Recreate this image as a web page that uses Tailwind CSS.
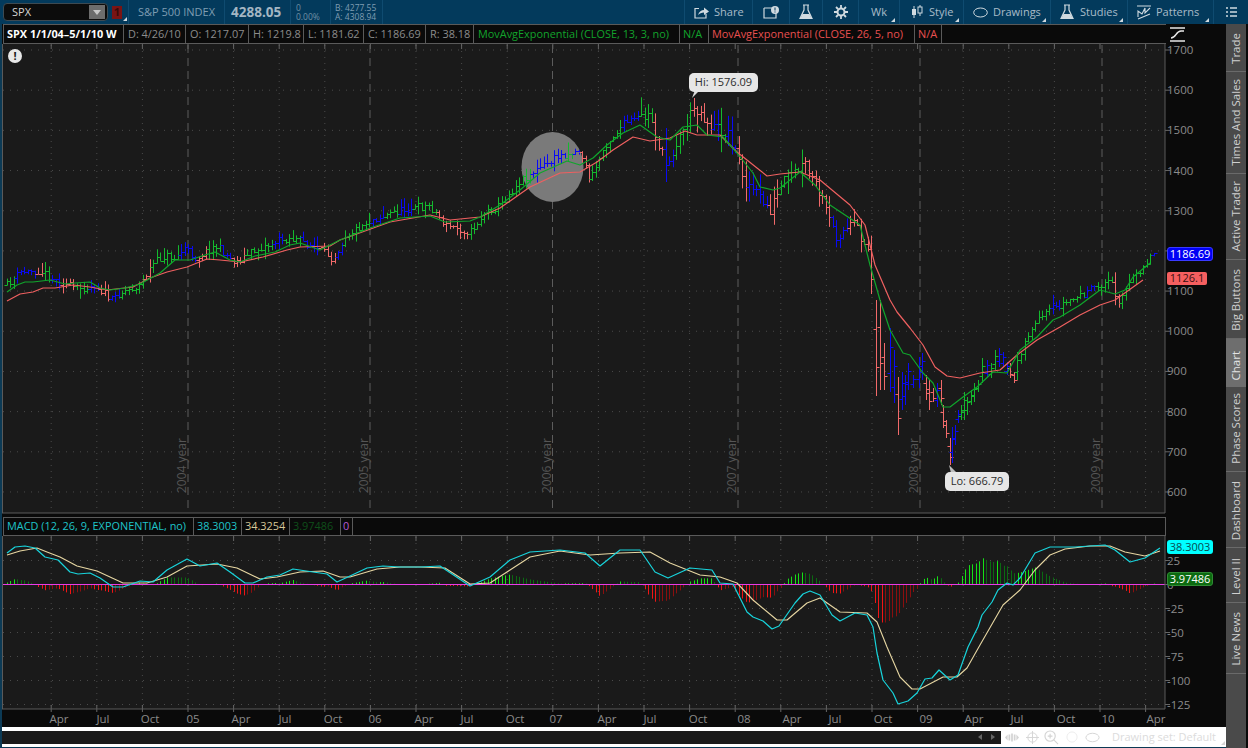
<!DOCTYPE html>
<html lang="en">

<head>
    <meta charset="UTF-8">
    <meta name="viewport" content="width=device-width, initial-scale=1.0">
    <script src="https://cdn.jsdelivr.net/npm/@tailwindcss/browser@4"></script>
    <title>SPX Chart</title>
</head>

<body class="w-[1248px] h-[748px] overflow-hidden bg-[#0a0a0a] font-['Open_Sans','Liberation_Sans',sans-serif] text-[11px]">
    <div class="relative flex flex-col w-[1248px] h-[748px]">

        <!-- top bar -->
        <div class="flex items-center h-6 shrink-0 bg-[#033a5c] text-[#a9bcc9]">
            <div class="flex items-center ml-[3px] w-[105px] h-[18px] bg-[#0c0c0c] border border-[#3d4a52] rounded-sm pl-2 text-[#d5d5d5]">
                <span class="grow">SPX</span>
                <span class="flex items-center justify-center w-[16px] h-[14px] mr-[2px] bg-[#6d6d6d]">
                    <svg width="8" height="5"><path d="M0 0H8L4 5Z" fill="#c8c8c8" /></svg>
                </span>
            </div>
            <span class="flex items-center justify-center w-[10px] h-[13px] ml-[4px] bg-[#7a1414] text-[#3a0a0a] font-bold">1</span>
            <span class="ml-[1px] mt-[14px]"><svg width="4" height="4"><path d="M4 0V4H0Z" fill="#cfd8de" /></svg></span>
            <div class="flex items-center w-[96px] h-full ml-[1px] pl-[9px] border-l border-[#0f4b70] text-[#7f9db2]">S&amp;P 500 INDEX</div>
            <div class="flex items-center w-[66px] h-full pl-[6px] border-l border-[#0f4b70] text-[13.5px] font-bold text-[#a4b6c3]">4288.05</div>
            <div class="flex flex-col justify-center w-[40px] h-full pl-[5px] border-l border-[#0f4b70] text-[8.5px] leading-[9px] text-[#6f90a6]">
                <span>0</span><span>0.00%</span>
            </div>
            <div class="flex flex-col justify-center w-[52px] h-full pl-[4px] border-l border-[#0f4b70] text-[8.5px] leading-[9px] text-[#7f9db2]">
                <span>B: 4277.55</span><span>A: 4308.94</span>
            </div>
            <div class="w-[302px] h-full border-l border-[#0f4b70]"></div>

            <div class="flex items-center w-[68px] h-full pl-[9px] gap-[5px] border-l border-[#0f4b70]">
                <svg width="15" height="13" viewBox="0 0 15 13" fill="none"><path d="M5 2.500H1V12H12V8" stroke="#d0dae0" stroke-width="1.200" /><path d="M4 9C5 5.500 7.500 4 10 4V1.500L15 5.500L10 9V6.500C7.500 6.500 5.500 7.500 4 9Z" fill="#d0dae0" /></svg>
                <span>Share</span>
            </div>
            <div class="flex items-center justify-center w-[37px] h-full border-l border-[#0f4b70]">
                <svg width="16" height="13" viewBox="0 0 16 13" fill="none"><path d="M1 2H10M1 2V12H13V7" stroke="#d0dae0" stroke-width="1.200" /><circle cx="12" cy="4" r="4" fill="#d0dae0" /><path d="M12 1.500V4.500M12 5.500V6.500" stroke="#033a5c" /></svg>
            </div>
            <div class="flex items-center justify-center w-[33px] h-full border-l border-[#0f4b70]">
                <svg width="14" height="16" viewBox="0 0 14 16" fill="none"><path d="M4 1H10M5 1V6L1 14.500H13L9 6V1" stroke="#d0dae0" stroke-width="1.200" /><path d="M3.500 10H10.500L13 15H1Z" fill="#d0dae0" /></svg>
            </div>
            <div class="flex items-center justify-center w-[36px] h-full border-l border-[#0f4b70]">
                <svg width="14" height="14" viewBox="0 0 14 14" fill="none"><circle cx="7" cy="7" r="3.500" stroke="#d0dae0" stroke-width="2" /><path d="M7 0V3M7 11V14M0 7H3M11 7H14M2 2L4 4M10 10L12 12M12 2L10 4M4 10L2 12" stroke="#d0dae0" stroke-width="1.800" /></svg>
            </div>
            <div class="relative flex items-center justify-center w-[41px] h-full border-l border-[#0f4b70]">
                <span>Wk</span>
                <svg class="absolute right-[4px] bottom-[2px]" width="4" height="4"><path d="M4 0V4H0Z" fill="#cfd8de" /></svg>
            </div>
            <div class="relative flex items-center w-[64px] h-full pl-[11px] gap-[6px] border-l border-[#0f4b70]">
                <svg width="12" height="14" viewBox="0 0 12 14" fill="none"><path d="M3 1V13M9 0V11" stroke="#d0dae0" /><rect x="1" y="4" width="4" height="6" fill="#d0dae0" /><rect x="7" y="2" width="4" height="6" fill="#033a5c" stroke="#d0dae0" /></svg>
                <span>Style</span>
                <svg class="absolute right-[4px] bottom-[2px]" width="4" height="4"><path d="M4 0V4H0Z" fill="#cfd8de" /></svg>
            </div>
            <div class="relative flex items-center w-[87px] h-full pl-[9px] gap-[5px] border-l border-[#0f4b70]">
                <svg width="15" height="11" viewBox="0 0 15 11" fill="none"><ellipse cx="7.500" cy="5.500" rx="6.800" ry="4.500" stroke="#d0dae0" /></svg>
                <span>Drawings</span>
                <svg class="absolute right-[4px] bottom-[2px]" width="4" height="4"><path d="M4 0V4H0Z" fill="#cfd8de" /></svg>
            </div>
            <div class="relative flex items-center w-[77px] h-full pl-[9px] gap-[6px] border-l border-[#0f4b70]">
                <svg width="14" height="16" viewBox="0 0 14 16" fill="none"><path d="M4 1H10M5 1V6L1 14.500H13L9 6V1" stroke="#d0dae0" stroke-width="1.200" /><path d="M3.500 10H10.500L13 15H1Z" fill="#d0dae0" /></svg>
                <span>Studies</span>
                <svg class="absolute right-[4px] bottom-[2px]" width="4" height="4"><path d="M4 0V4H0Z" fill="#cfd8de" /></svg>
            </div>
            <div class="relative flex items-center w-[86px] h-full pl-[9px] gap-[5px] border-l border-[#0f4b70]">
                <svg width="14" height="15" viewBox="0 0 14 15" fill="none"><path d="M0 1H14M1 12V6L5 9L8 3V8L13 3M1 14L13 9" stroke="#d0dae0" stroke-width="1.100" /></svg>
                <span>Patterns</span>
                <svg class="absolute right-[4px] bottom-[2px]" width="4" height="4"><path d="M4 0V4H0Z" fill="#cfd8de" /></svg>
            </div>
            <div class="flex items-center justify-center grow h-full border-l border-[#0f4b70]">
                <svg width="11" height="10" viewBox="0 0 11 10" fill="none"><path d="M0 1H2M4 1H11M0 5H2M4 5H11M0 9H2M4 9H11" stroke="#d0dae0" stroke-width="1.300" /></svg>
            </div>
        </div>

        <div class="flex grow min-h-0">
            <!-- chart column -->
            <div class="relative flex flex-col w-[1226px] border-l-2 border-[#0c3a55]">
                <!-- study title row -->
                <div class="flex w-[1163px] h-5 ml-[1px] bg-[#0a0a0a] border-t border-b border-l border-[#5a5a5a] items-stretch text-[10.9px]">
                    <div class="flex items-center w-[120px] pl-[3px] border-r border-[#5a5a5a] font-bold text-white">SPX 1/1/04–5/1/10 W</div>
                    <div class="flex items-center w-[62px] pl-[4px] border-r border-[#5a5a5a] text-[#8c8c8c]">D: 4/26/10</div>
                    <div class="flex items-center w-[63px] pl-[4px] border-r border-[#5a5a5a] text-[#8c8c8c]">O: 1217.07</div>
                    <div class="flex items-center w-[55px] pl-[4px] border-r border-[#5a5a5a] text-[#8c8c8c]">H: 1219.8</div>
                    <div class="flex items-center w-[60px] pl-[4px] border-r border-[#5a5a5a] text-[#8c8c8c]">L: 1181.62</div>
                    <div class="flex items-center w-[62px] pl-[4px] border-r border-[#5a5a5a] text-[#8c8c8c]">C: 1186.69</div>
                    <div class="flex items-center w-[48px] pl-[4px] border-r border-[#5a5a5a] text-[#8c8c8c]">R: 38.18</div>
                    <div class="flex items-center w-[206px] pl-[4px] border-r border-[#5a5a5a] text-[#12a32c]">MovAvgExponential (CLOSE, 13, 3, no)</div>
                    <div class="flex items-center w-[29px] pl-[3px] border-r border-[#5a5a5a] text-[#12a32c]">N/A</div>
                    <div class="flex items-center w-[206px] pl-[3px] border-r border-[#5a5a5a] text-[#e85050]">MovAvgExponential (CLOSE, 26, 5, no)</div>
                    <div class="flex items-center w-[27px] pl-[3px] border-r border-[#5a5a5a] text-[#e85050]">N/A</div>
                </div>
                <svg id="price" width="1224" height="469" viewBox="2 44 1224 469" class="block shrink-0 overflow-visible font-['Open_Sans','Liberation_Sans',sans-serif]"></svg>
                <div class="h-1 shrink-0"></div>
                <!-- macd title row -->
                <div class="flex w-[1163px] h-[19px] ml-[1px] bg-[#0a0a0a] border-t border-l border-r border-b border-[#5a5a5a] items-stretch text-[10.9px]">
                    <div class="flex items-center w-[190px] pl-[3px] border-r border-[#5a5a5a] text-[#1fc4c9] whitespace-nowrap">MACD (12, 26, 9, EXPONENTIAL, no)</div>
                    <div class="flex items-center w-[48px] pl-[3px] border-r border-[#5a5a5a] text-[#1fc4c9]">38.3003</div>
                    <div class="flex items-center w-[48px] pl-[3px] border-r border-[#5a5a5a] text-[#d8c89a]">34.3254</div>
                    <div class="flex items-center w-[51px] pl-[3px] border-r border-[#5a5a5a] text-[#0f4f1a]">3.97486</div>
                    <div class="flex items-center w-[12px] pl-[2px] border-r border-[#5a5a5a] text-[#b45ad2]">0</div>
                </div>
                <svg id="macd" width="1224" height="191" viewBox="2 536 1224 191" class="block shrink-0 font-['Open_Sans','Liberation_Sans',sans-serif]"></svg>
                <!-- bottom strip -->
                <div class="relative flex items-center h-5 bg-white whitespace-nowrap">
                    <div class="flex items-center justify-end w-[999px] h-[13px] shrink-0 bg-[#1a1a1a] pr-[6px] gap-[9px]">
                        <svg width="4" height="6"><path d="M4 0V6L0 3Z" fill="#666" /></svg>
                        <svg width="4" height="6"><path d="M0 0V6L4 3Z" fill="#666" /></svg>
                    </div>
                    <div class="flex items-center pl-[4px] shrink-0">
                        <svg width="14" height="9" viewBox="0 0 16 9" fill="#d4d4d4"><path d="M0 4.500L3 1V8ZM16 4.500L13 1V8ZM4 1H6V8H4ZM10 1H12V8H10ZM7 0H9V9H7Z" /></svg>
                        <svg class="ml-[7px]" width="13" height="13" viewBox="0 0 14 14" fill="none" stroke="#d4d4d4"><circle cx="7" cy="7" r="5" /><path d="M7 0V14M0 7H14" /></svg>
                        <svg class="ml-[5px]" width="15" height="15" viewBox="0 0 16 16" fill="none" stroke="#d4d4d4" stroke-width="1.200"><circle cx="6.500" cy="6.500" r="5.500" /><path d="M4 6.500H9M6.500 4V9M10.500 10.500L15 15" /></svg>
                        <svg class="ml-[7px]" width="12" height="12" viewBox="0 0 13 13" fill="none" stroke="#ececec"><circle cx="6.500" cy="6.500" r="5.500" /></svg>
                        <svg class="ml-[7px]" width="15" height="11" viewBox="0 0 16 11" fill="none" stroke="#d4d4d4"><ellipse cx="8" cy="5.500" rx="7" ry="4.500" /></svg>
                        <span class="ml-[12px] text-[#dcdcdc]">Drawing set: Default</span>
                    </div>
                    <svg class="absolute right-[1px] bottom-[2px]" width="4" height="4"><path d="M4 0V4H0Z" fill="#d4d4d4" /></svg>
                </div>
                <div class="h-px bg-[#0c3a55]"></div>

                <!-- overlays -->
                <span class="absolute left-[6px] top-[25px] flex items-center justify-center w-[14px] h-[14px] rounded-full bg-[#e8e8e8] text-[#1a1a1a] text-[11px] font-bold">!</span>
                <svg class="absolute left-[690px] top-[66px]" width="8" height="8"><path d="M0 8L3 0H8Z" fill="#dcdcdc" /></svg>
                <span class="absolute left-[687px] top-[49px] flex items-center justify-center w-[69px] h-[19px] rounded-[5px] bg-[#e6e6e6] text-[#2b2b2b]">Hi: 1576.09</span>
                <svg class="absolute left-[947px] top-[441px]" width="8" height="8"><path d="M0 0L8 8H2Z" fill="#bdbdbd" /></svg>
                <span class="absolute left-[943px] top-[448px] flex items-center justify-center w-[64px] h-[19px] rounded-[5px] bg-[#e6e6e6] text-[#2b2b2b]">Lo: 666.79</span>
                <span class="absolute left-[1165px] top-[223px] flex items-center justify-center w-[46px] h-[14px] rounded-[3px] bg-[#0000f5] border border-[#3a3aff] text-white">1186.69</span>
                <span class="absolute left-[1165px] top-[248px] flex items-center justify-center w-[40px] h-[13px] rounded-[2px] bg-[#f55f5f] text-[#3a1010]">1126.1</span>
                <span class="absolute left-[1165px] top-[516px] flex items-center justify-center w-[46px] h-[14px] rounded-[3px] bg-[#00ffff] text-[#0a4a50]">38.3003</span>
                <span class="absolute left-[1165px] top-[548px] flex items-center justify-center w-[46px] h-[14px] rounded-[3px] bg-[#0c6b10] border border-[#2f8a33] text-white">3.97486</span>
            </div>

            <!-- side tabs -->
            <div class="flex flex-col w-[20px] shrink-0 bg-[#4a4a4a] text-[#d0d0d0] text-[11.5px]">
                <div class="flex items-center justify-end pb-[7px] flex-col h-[48px] shrink-0 border-b border-[#6a6a6a]"><span class="[writing-mode:vertical-rl] rotate-180">Trade</span></div>
                <div class="flex items-center justify-end pb-[7px] flex-col h-[102px] shrink-0 border-b border-[#6a6a6a]"><span class="[writing-mode:vertical-rl] rotate-180">Times And Sales</span></div>
                <div class="flex items-center justify-end pb-[7px] flex-col h-[86px] shrink-0 border-b border-[#6a6a6a]"><span class="[writing-mode:vertical-rl] rotate-180">Active Trader</span></div>
                <div class="flex items-center justify-end pb-[7px] flex-col h-[79px] shrink-0 border-b border-[#6a6a6a]"><span class="[writing-mode:vertical-rl] rotate-180">Big Buttons</span></div>
                <div class="flex items-center justify-end pb-[7px] flex-col h-[48px] shrink-0 bg-[#6e6e6e] text-[#e4e4e4]"><span class="[writing-mode:vertical-rl] rotate-180">Chart</span></div>
                <div class="flex items-center justify-end pb-[7px] flex-col h-[85px] shrink-0 border-b border-[#6a6a6a]"><span class="[writing-mode:vertical-rl] rotate-180">Phase Scores</span></div>
                <div class="flex items-center justify-end pb-[7px] flex-col h-[76px] shrink-0 border-b border-[#6a6a6a]"><span class="[writing-mode:vertical-rl] rotate-180">Dashboard</span></div>
                <div class="flex items-center justify-end pb-[7px] flex-col h-[55px] shrink-0 border-b border-[#6a6a6a]"><span class="[writing-mode:vertical-rl] rotate-180">Level II</span></div>
                <div class="flex items-center justify-end pb-[7px] flex-col h-[71px] shrink-0 border-b border-[#6a6a6a]"><span class="[writing-mode:vertical-rl] rotate-180">Live News</span></div>
            </div>
            <div class="w-[2px] bg-[#0a0a0a]"></div>
        </div>
    </div>

    <script type="text/javascript">
        // all series are kept in screen pixels, read off the chart
        const ema13 = [[7,292],[17,285],[25,282],[33,282],[50,280],[65,284],[75,283],[90,282],[100,288],[110,290],[125,288],[140,284],[160,273],[175,260],[190,260],[205,255],[215,252],[230,260],[240,262],[255,256],[275,252],[290,245],[300,243],[320,250],[340,240],[370,228],[400,218],[430,216],[445,222],[470,221],[480,217],[500,205],[520,190],[540,173],[567,161],[580,165],[593,158],[607,145],[623,133],[640,125],[657,137],[670,140],[683,127],[697,125],[707,135],[723,137],[737,153],[753,173],[760,187],[773,190],[780,188],[800,172],[815,185],[830,205],[860,225],[870,265],[880,300],[890,330],[903,353],[910,355],[923,373],[933,383],[943,407],[950,407],[963,397],[977,387],[993,372],[1007,373],[1020,350],[1037,337],[1053,320],[1060,317],[1080,305],[1100,290],[1115,294],[1125,290],[1133,277],[1150,263]];
        const ema26 = [[7,301],[20,294],[33,292],[43,288],[55,288],[73,285],[90,287],[107,290],[133,287],[150,278],[167,272],[187,267],[207,259],[220,260],[240,262],[263,257],[287,250],[300,247],[330,246],[340,240],[390,222],[430,215],[450,220],[480,217],[500,208],[530,187],[560,173],[580,172],[597,162],[613,150],[633,137],[650,141],[670,138],[685,131],[697,135],[720,135],[737,152],[757,168],[767,176],[780,174],[800,172],[820,180],[850,205],[865,225],[875,265],[890,300],[897,312],[910,328],[923,345],[935,367],[947,376],[960,378],[980,373],[1000,370],[1017,355],[1037,340],[1060,327],[1080,315],[1100,305],[1115,300],[1143,280]];
        const closePath = [[7,285],[20,272],[40,270],[55,280],[75,288],[95,285],[112,300],[120,292],[140,285],[152,265],[165,255],[175,258],[185,248],[195,258],[215,245],[235,262],[255,250],[285,238],[300,240],[320,250],[333,258],[345,235],[370,220],[400,210],[430,205],[445,225],[470,232],[485,212],[500,205],[520,180],[540,168],[560,155],[580,150],[590,180],[605,145],[625,122],[650,115],[665,165],[680,135],[695,105],[710,125],[730,135],[745,180],[770,210],[785,180],[805,165],[820,195],[835,235],[855,225],[868,250],[874,300],[1017,360],[1030,330],[1050,310],[1070,300],[1090,290],[1110,280],[1118,300],[1135,275],[1157,248]];
        // colour of the bars, as runs ending at x
        const colorRuns = [[17,"g"],[37,"b"],[42,"r"],[52,"g"],[62,"b"],[76,"r"],[90,"g"],[98,"b"],[110,"r"],[120,"b"],[145,"g"],[152,"r"],[178,"g"],[197,"b"],[207,"r"],[222,"g"],[232,"b"],[245,"r"],[275,"g"],[285,"b"],[300,"g"],[318,"b"],[335,"r"],[345,"b"],[370,"g"],[385,"b"],[400,"g"],[412,"b"],[437,"g"],[470,"r"],[530,"g"],[566,"b"],[573,"g"],[582,"b"],[590,"r"],[621,"g"],[640,"b"],[652,"g"],[665,"r"],[673,"b"],[693,"g"],[713,"r"],[718,"b"],[726,"g"],[737,"b"],[747,"r"],[767,"b"],[780,"r"],[805,"g"],[830,"r"],[850,"b"],[874,"r"],[1018,"x"],[1050,"g"],[1060,"b"],[1085,"g"],[1095,"b"],[1113,"g"],[1120,"r"],[1152,"g"],[1160,"b"]];
        // the crash and the rebound, bar by bar: x, high, low, colour
        const crashBars = [[876,300,396,"r"],[880,300,390,"r"],[884,343,390,"r"],[890,328,392,"b"],[894,350,403,"b"],[898,377,435,"r"],[902,372,410,"b"],[905,375,405,"b"],[908,363,390,"b"],[913,375,388,"b"],[919,357,388,"b"],[922,353,380,"b"],[926,375,400,"r"],[929,380,410,"r"],[933,388,402,"r"],[937,383,407,"b"],[941,380,405,"r"],[943,405,428,"r"],[946,420,438,"r"],[950,438,465,"r"],[952,427,463,"b"],[955,425,445,"b"],[958,410,423,"b"],[961,405,420,"g"],[964,392,420,"g"],[967,397,415,"g"],[971,390,405,"g"],[974,383,402,"g"],[978,380,392,"g"],[982,358,383,"g"],[987,360,378,"b"],[991,363,378,"g"],[995,350,370,"g"],[999,348,367,"b"],[1003,352,367,"b"],[1007,362,375,"b"],[1010,363,378,"r"],[1014,372,383,"r"],[1017,352,380,"g"]];
        const macdLine = [[7,553],[15,547],[25,546],[35,548],[45,557],[58,560],[70,572],[78,574],[90,573],[100,578],[113,587],[123,587],[140,581],[153,582],[167,570],[187,559],[200,566],[217,563],[230,572],[245,583],[253,583],[267,577],[280,575],[293,569],[313,572],[327,574],[337,582],[350,576],[367,568],[383,566],[400,567],[420,567],[440,566],[458,578],[470,586],[490,577],[510,560],[530,552],[560,550],[585,553],[600,566],[620,550],[640,550],[655,572],[668,578],[690,568],[712,570],[720,583],[733,584],[747,612],[753,617],[763,621],[772,629],[779,626],[795,603],[803,594],[810,591],[820,595],[832,615],[840,621],[855,613],[867,615],[873,627],[877,653],[883,680],[893,693],[898,704],[908,701],[917,693],[925,679],[932,678],[939,670],[950,680],[958,675],[968,647],[978,627],[982,615],[992,602],[998,590],[1007,583],[1013,585],[1020,578],[1035,553],[1050,547],[1075,547],[1105,545],[1115,550],[1130,562],[1145,558],[1160,548]];
        const signalLine = [[7,555],[20,551],[37,548],[47,552],[60,557],[77,566],[97,571],[110,577],[123,583],[147,583],[167,577],[187,566],[217,564],[237,568],[260,579],[277,577],[300,572],[323,571],[340,577],[350,577],[377,569],[400,567],[420,567],[445,568],[470,584],[490,583],[510,570],[530,557],[560,551],[590,555],[620,553],[650,552],[670,563],[700,575],[720,577],[737,583],[753,600],[777,620],[787,620],[807,603],[820,598],[840,612],[867,613],[877,622],[887,647],[900,677],[912,689],[920,689],[943,677],[957,677],[967,668],[980,645],[1003,605],[1020,590],[1035,570],[1050,555],[1065,549],[1090,546],[1110,546],[1125,552],[1145,556],[1160,551]];

        const at = (pts, x) => {
            if (x <= pts[0][0]) return pts[0][1];
            for (let i = 1; i < pts.length; i++) {
                if (x <= pts[i][0]) {
                    const [x0, y0] = pts[i - 1], [x1, y1] = pts[i];
                    return y0 + (y1 - y0) * (x - x0) / (x1 - x0);
                }
            }
            return pts[pts.length - 1][1];
        };
        const poly = (pts, color, w) => `<polyline points="${pts.map(p => p.join(",")).join(" ")}" fill="none" stroke="${color}" stroke-width="${w}" stroke-linejoin="round"/>`;
        let seed = 11;
        const rnd = () => (seed = (seed * 16807) % 2147483647) / 2147483647;
        const barColors = { g: "#14b92e", b: "#0a0af5", r: "#f26a6a" };
        const barPath = (x, hi, lo, open, close, col) => `<path d="M${x} ${hi.toFixed(1)}V${lo.toFixed(1)}M${x - 3} ${Math.round(open) + 0.5}H${x}M${x} ${Math.round(close) + 0.5}H${x + 3}" fill="none" stroke="${barColors[col]}"/>`;

        // price pane
        const yearX = [188, 370, 552.5, 738, 920, 1102];
        const labelCol = "#8c8c8c";
        let s = `<rect x="2" y="44" width="1163" height="469" fill="#1a1a1a"/>`;
        for (let k = -3; k < 22; k++) {
            const x = 188 + 45.6 * k;
            if (x > 1 && x < 1165 && k % 4 !== 0) s += `<line x1="${x}" x2="${x}" y1="45" y2="513" stroke="#4a4a4a" stroke-dasharray="1 5"/>`;
            if (x > 1 && x < 1165) s += `<line x1="${x}" x2="${x}" y1="44" y2="49" stroke="#666"/>`;
        }
        for (let p = 600; p <= 1700; p += 100) {
            const y = 50 + (1700 - p) * 0.4018;
            s += `<line x1="3" x2="1165" y1="${y}" y2="${y}" stroke="#4a4a4a" stroke-dasharray="1 6"/>`;
            s += `<line x1="1165" x2="1170" y1="${y}" y2="${y}" stroke="#666"/>`;
            s += `<text x="1167" y="${y + 4}" font-size="11.500" fill="${labelCol}">${p}</text>`;
        }
        yearX.forEach((x, i) => {
            s += `<line x1="${x}" x2="${x}" y1="45" y2="513" stroke="#5c5c5c" stroke-dasharray="8 5"/>`;
            s += `<text transform="translate(${x - 2},493) rotate(-90)" font-size="12" fill="#555">${2004 + i} year</text>`;
        });
        s += `<ellipse cx="552.500" cy="167" rx="31" ry="35" fill="#7a7a7a"/>`;

        let prev = at(closePath, 7);
        for (let xf = 7; xf <= 1157; xf += 3.485) {
            const x = Math.round(xf) + 0.5;
            const col = colorRuns.find(r => xf <= r[0])[1];
            if (col === "x") { prev = 360; continue; }
            const wide = xf > 640 && xf < 874;
            const c = at(closePath, xf) + (rnd() - 0.5) * (wide ? 14 : 8);
            const range = wide ? 8 + rnd() * 14 : 4 + rnd() * 8;
            let hi = Math.min(prev, c) - range * rnd();
            let lo = Math.max(prev, c) + range * rnd();
            if (Math.abs(xf - 693) < 2) hi = 98;
            if (Math.abs(xf - 665) < 2) { hi = 128; lo = 182; }
            if (xf < 130) { hi = Math.max(hi, 262); lo = Math.min(lo, 307); }
            s += barPath(x, hi, lo, prev, c, col);
            prev = c;
        }
        crashBars.forEach(([x, hi, lo, col]) => {
            const span = lo - hi;
            const open = col === "r" ? hi + span * 0.3 : hi + span * 0.7;
            const close = col === "r" ? hi + span * 0.7 : hi + span * 0.3;
            s += barPath(x + 0.5, hi, lo, open, close, col);
        });
        s += poly(ema26, "#ef6060", 1.200) + poly(ema13, "#10a52c", 1.200);
        s += `<line x1="1165" x2="1165" y1="44" y2="513" stroke="#5a5a5a"/><line x1="2" x2="1165" y1="513" y2="513" stroke="#5a5a5a"/><line x1="2.500" x2="2.500" y1="44" y2="513" stroke="#5a5a5a"/>`;
        s += `<path d="M1170 28H1185M1170 41H1185M1171 38C1176 38 1176 31 1181 31H1184" fill="none" stroke="#e8e8e8" stroke-width="1.300"/>`;
        document.getElementById("price").innerHTML = s;

        // macd pane
        let m = `<rect x="2" y="536" width="1163" height="173" fill="#1a1a1a"/>`;
        for (let k = -3; k < 22; k++) {
            const x = 188 + 45.6 * k;
            if (x > 1 && x < 1165) {
                m += `<line x1="${x}" x2="${x}" y1="537" y2="709" stroke="#4a4a4a" stroke-dasharray="1 5"/>`;
                m += `<line x1="${x}" x2="${x}" y1="536" y2="541" stroke="#666"/>`;
                m += `<line x1="${x}" x2="${x}" y1="705" y2="712" stroke="#666"/>`;
            }
        }
        [[25, 560.5], [0, 584.5], [-25, 608.5], [-50, 632.5], [-75, 656.5], [-100, 680.5], [-125, 704.5]].forEach(([v, y]) => {
            if (v !== 0) m += `<line x1="3" x2="1165" y1="${y}" y2="${y}" stroke="#4a4a4a" stroke-dasharray="1 6"/>`;
            m += `<line x1="1165" x2="1170" y1="${y}" y2="${y}" stroke="#666"/>`;
            m += `<text x="1167" y="${y + 4}" font-size="11.500" fill="${labelCol}">${v}</text>`;
        });
        let prevDiff = 0;
        for (let xf = 7; xf <= 1157; xf += 3.485) {
            const x = Math.round(xf) + 0.5;
            const diff = at(signalLine, xf) - at(macdLine, xf);
            const up = diff > prevDiff;
            const col = diff > 0 ? (up ? "#16e016" : "#0b6a12") : (up ? "#8a0f0f" : "#f01515");
            if (Math.abs(diff) > 0.5) m += `<line x1="${x}" x2="${x}" y1="584.500" y2="${(584.5 - Math.max(-38, Math.min(30, diff))).toFixed(1)}" stroke="${col}"/>`;
            prevDiff = diff;
        }
        m += `<line x1="3" x2="1165" y1="584.500" y2="584.500" stroke="#e83ce8" stroke-width="1.200"/>`;
        m += poly(signalLine, "#e6d6a2", 1.100) + poly(macdLine, "#18d4dc", 1.200);
        m += `<line x1="1165" x2="1165" y1="536" y2="709" stroke="#5a5a5a"/><line x1="2" x2="1165" y1="709" y2="709" stroke="#5a5a5a"/><line x1="2.500" x2="2.500" y1="536" y2="709" stroke="#5a5a5a"/>`;
        [["Apr", 59], ["Jul", 103], ["Oct", 150], ["05", 193], ["Apr", 241], ["Jul", 285], ["Oct", 333], ["06", 375], ["Apr", 424], ["Jul", 467], ["Oct", 515], ["07", 556], ["Apr", 607], ["Jul", 650], ["Oct", 698], ["08", 744], ["Apr", 792], ["Jul", 835], ["Oct", 883], ["09", 926], ["Apr", 974], ["Jul", 1017], ["Oct", 1066], ["10", 1108], ["Apr", 1156]].forEach(([t, x]) => {
            m += `<text x="${x}" y="723" text-anchor="middle" font-size="11.500" fill="${labelCol}">${t}</text>`;
        });
        document.getElementById("macd").innerHTML = m;
    </script>
</body>

</html>
